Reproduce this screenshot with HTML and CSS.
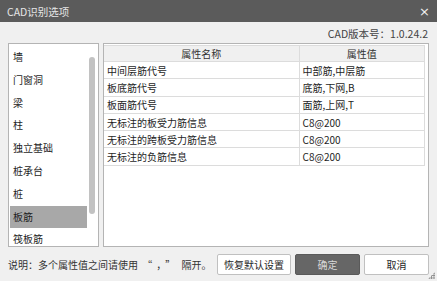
FILE: index.html
```html
<!DOCTYPE html>
<html lang="zh">
<head>
  <meta charset="UTF-8">
  <title>CAD识别选项</title>
  <link rel="stylesheet" href="styles.css">
</head>
<body>
  <div class="dialog">
    <div class="titlebar">
      <span class="title">CAD识别选项</span>
      <span class="close">×</span>
    </div>

    <div class="content">
      <div class="version">CAD版本号：1.0.24.2</div>

      <div class="main">
        <div class="list-box">
          <ul class="list">
            <li>墙</li>
            <li>门窗洞</li>
            <li>梁</li>
            <li>柱</li>
            <li>独立基础</li>
            <li>桩承台</li>
            <li>桩</li>
            <li class="selected">板筋</li>
            <li>筏板筋</li>
          </ul>
          <div class="scrollbar"><div class="thumb"></div></div>
        </div>

        <div class="table-box">
          <table class="props">
            <thead>
              <tr><th class="col-name">属性名称</th><th>属性值</th></tr>
            </thead>
            <tbody>
              <tr><td>中间层筋代号</td><td>中部筋,中层筋</td></tr>
              <tr><td>板底筋代号</td><td>底筋,下网,B</td></tr>
              <tr><td>板面筋代号</td><td>面筋,上网,T</td></tr>
              <tr><td>无标注的板受力筋信息</td><td>C8@200</td></tr>
              <tr><td>无标注的跨板受力筋信息</td><td>C8@200</td></tr>
              <tr><td>无标注的负筋信息</td><td>C8@200</td></tr>
            </tbody>
          </table>
        </div>
      </div>

      <div class="footer">
        <span class="note">说明：多个属性值之间请使用 <span class="quote">“，”</span> 隔开。</span>
        <div class="buttons">
          <button class="btn">恢复默认设置</button>
          <button class="btn primary">确定</button>
          <button class="btn">取消</button>
        </div>
      </div>
    </div>

    <div class="grip"></div>
  </div>
</body>
</html>
```

FILE: styles.css
```css
* {
  margin: 0;
  padding: 0;
  box-sizing: border-box;
}

body {
  font-family: "Noto Sans CJK SC", "Noto Sans", sans-serif;
  font-size: 10px;
  color: #1e1e1e;
  background: #f0f0f0;
  width: 437px;
  height: 281px;
  overflow: hidden;
}

.dialog {
  position: relative;
  height: 281px;
}

.titlebar {
  height: 22px;
  background: #5b5b5b;
  color: #e6e6e6;
  display: flex;
  align-items: center;
  justify-content: space-between;
  padding: 0 7px;
}

.title {
  font-size: 10.5px;
}

.close {
  font-family: "DejaVu Sans", sans-serif;
  font-size: 13px;
  color: #f0f0f0;
}

.content {
  padding: 0 8px;
}

.version {
  height: 21px;
  line-height: 24px;
  font-size: 10.5px;
  text-align: right;
  color: #444;
  padding-right: 1px;
}

.main {
  display: flex;
  gap: 4px;
  height: 204px;
}

.list-box {
  position: relative;
  width: 91px;
  background: #fff;
  border: 1px solid #b4b4b4;
  padding: 2px 1px;
}

.list {
  list-style: none;
  width: 77px;
}

.list li {
  height: 22.8px;
  line-height: 22.8px;
  padding-left: 3px;
}

.list li.selected {
  background: #a8a8a8;
}

.scrollbar {
  position: absolute;
  top: 13px;
  right: 3px;
  width: 6px;
  height: 157px;
}

.thumb {
  height: 100%;
  background: #c2c2c2;
  border-radius: 3px;
}

.table-box {
  flex: 1;
  background: #fff;
  border: 1px solid #b4b4b4;
  padding: 1px 3px 0 0;
}

.props {
  border-collapse: collapse;
  width: 100%;
}

.props th,
.props td {
  border: 1px solid #dcdcdc;
  height: 17.3px;
  font-weight: normal;
  white-space: nowrap;
}

.props th {
  background: #f0f0f0;
  height: 16px;
  color: #333;
  text-align: center;
}

.props td {
  padding-left: 3px;
}

.props .col-name {
  width: 195px;
}

.props tr > :first-child {
  border-left: none;
}

.footer {
  display: flex;
  align-items: center;
  justify-content: space-between;
  height: 31px;
  padding-top: 3px;
}

.note {
  color: #333;
}

.quote {
  letter-spacing: 4px;
  padding-left: 2px;
}

.buttons {
  display: flex;
  gap: 4px;
}

.btn {
  font-family: inherit;
  font-size: 10px;
  height: 21px;
  width: 65px;
  background: #fff;
  border: 1px solid #c0c0c0;
  border-radius: 2px;
  color: #1e1e1e;
}

.btn:first-child {
  width: 74px;
}

.btn.primary {
  background: #666;
  border-color: #5a5a5a;
  color: #d8d8d8;
}

.grip {
  position: absolute;
  right: 2px;
  bottom: 2px;
  width: 7px;
  height: 7px;
  background:
    radial-gradient(circle, #888 0.8px, transparent 1px) 0 0 / 2.4px 2.4px;
  clip-path: polygon(100% 0, 100% 100%, 0 100%);
}
```
